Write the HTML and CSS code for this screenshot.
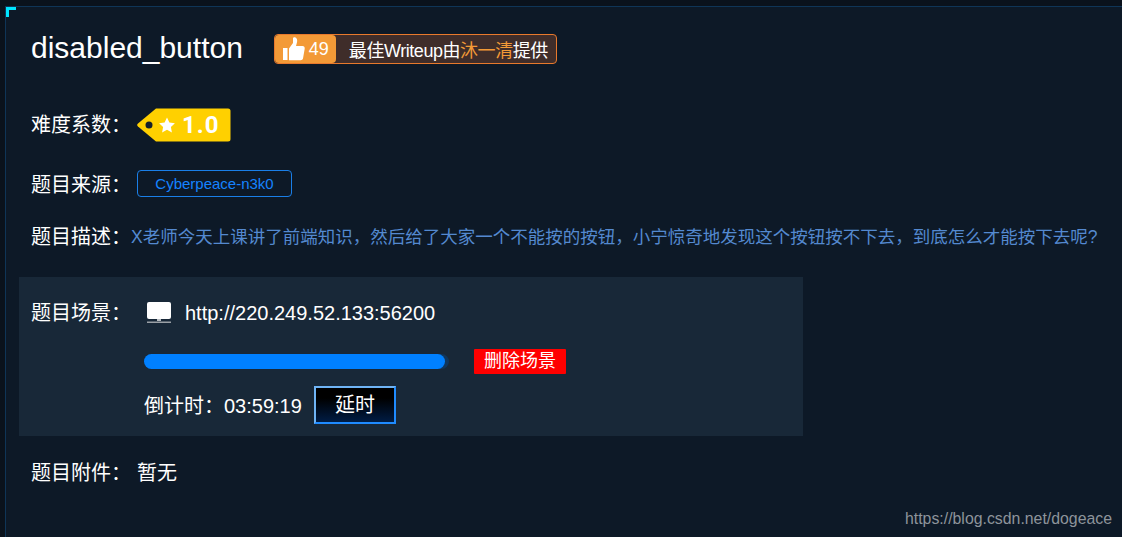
FILE: index.html
```html
<!DOCTYPE html>
<html lang="zh">
<head>
<meta charset="utf-8">
<title>disabled_button</title>
<link rel="stylesheet" href="styles.css">
</head>
<body>
<main class="panel">
  <span class="corner"></span>
  <header class="head">
    <h1 class="title">disabled_button</h1>
    <div class="wp">
      <span class="wp-like">
        <svg class="thumb" viewBox="0 0 22 24"><path d="M0 11h4.500v12H0zM6 11.500 10 6V1.500C10 .5 11 0 12 .2c2 .6 2.600 2.800 2 5L13 9h6.500c1.500 0 2.500 1.300 2.200 2.700L20 21.500c-.3 1-1.200 1.700-2.300 1.700H6z" fill="#fff"/></svg>
        <span class="wp-num">49</span>
      </span>
      <span class="wp-text">最佳Writeup由<span class="wp-name">沐一清</span>提供</span>
    </div>
  </header>

  <div class="row row-level">
    <span class="label">难度系数：</span>
    <svg class="tag" viewBox="0 0 94 34">
      <path d="M19 .5H91a2.500 2.500 0 0 1 2.500 2.500v28a2.500 2.500 0 0 1-2.500 2.500H19L1 18.500a2 2 0 0 1 0-3z" fill="#ffd000"/>
      <circle cx="12" cy="17" r="3.500" fill="#14202c"/>
      <path d="m30 9.500 2.400 5 5.500.7-4 3.800 1 5.400-4.900-2.600-4.900 2.600 1-5.400-4-3.800 5.500-.7z" fill="#fff"/>
      <text x="45" y="25" class="tag-text">1.0</text>
    </svg>
  </div>

  <div class="row row-source">
    <span class="label label-low">题目来源：</span>
    <span class="source">Cyberpeace-n3k0</span>
  </div>

  <div class="row row-desc">
    <span class="label label-low">题目描述：</span>
    <span class="desc">X老师今天上课讲了前端知识，然后给了大家一个不能按的按钮，小宁惊奇地发现这个按钮按不下去，到底怎么才能按下去呢?</span>
  </div>

  <section class="scene">
    <div class="scene-label label">题目场景：</div>
    <div class="scene-body">
      <div class="url-row">
        <svg class="monitor" viewBox="0 0 24 22"><rect x="0" y="0" width="24" height="17" rx="2" fill="#fff"/><rect x="10" y="17" width="4" height="2" fill="#b8bdc2"/><rect x="0" y="19.500" width="24" height="1.500" fill="#9aa0a6"/></svg>
        <span class="url">http://220.249.52.133:56200</span>
      </div>
      <div class="bar-row">
        <div class="track"><div class="fill"></div></div>
        <span class="del">删除场景</span>
      </div>
      <div class="count-row">
        <span class="count">倒计时：03:59:19</span>
        <span class="delay">延时</span>
      </div>
    </div>
  </section>

  <div class="row row-attach">
    <span class="label">题目附件：</span>
    <span class="none">暂无</span>
  </div>
</main>
<div class="mark">https://blog.csdn.net/dogeace</div>
</body>
</html>
```
FILE: styles.css
```css
* { box-sizing: border-box; }
html, body { margin: 0; height: 100%; }
body {
  background: #0a121c;
  overflow: hidden;
  padding: 6px 0 0 5px;
  color: #fff;
  font-family: "Liberation Sans", "Noto Sans CJK SC", sans-serif;
  font-size: 18px;
  position: relative;
}
.panel {
  position: relative;
  height: 531px;
  background: #0d1927;
  border: 1px solid #0f3557;
  border-right: 0;
  border-bottom: 0;
  padding: 0 0 0 13px;
}
.corner {
  position: absolute;
  left: 0;
  top: 0;
  width: 10px;
  height: 10px;
  border-left: 3px solid #00e5ff;
  border-top: 3px solid #00e5ff;
}
.head {
  display: flex;
  align-items: center;
  height: 30px;
  margin-top: 27px;
  padding-left: 12px;
}
.title {
  margin: -2px 0 0;
  font-size: 30px;
  font-weight: 400;
  line-height: 30px;
}
.wp {
  display: flex;
  align-items: center;
  width: 283px;
  height: 30px;
  margin-left: 31px;
  background: #3f2d2a;
  border: 1px solid #e8792c;
  border-radius: 4px;
}
.wp-like {
  display: flex;
  align-items: center;
  width: 61px;
  height: 28px;
  padding-left: 8px;
  background: #f39a37;
  border-radius: 4px;
}
.thumb { width: 22px; height: 24px; }
.wp-num { margin-left: 4px; font-size: 18px; }
.wp-text { margin-left: 13px; font-size: 18px; letter-spacing: -.45px; white-space: nowrap; }
.wp-name { color: #f39a37; }
.row { display: flex; align-items: center; padding-left: 12px; }
.label { width: 106px; flex: none; font-size: 20px; line-height: 24px; }
.label-low { padding-top: 4px; box-sizing: content-box; }
.row-level { height: 34px; margin-top: 44px; }
.tag { width: 94px; height: 34px; }
.tag-text { font: 700 24px Roboto, sans-serif; fill: #fff; letter-spacing: 1px; }
.row-source { height: 26px; margin-top: 28px; }
.source {
  width: 155px;
  height: 27px;
  border: 1px solid #1a7fe8;
  border-radius: 4px;
  color: #1583ff;
  font-size: 15px;
  line-height: 25px;
  text-align: center;
}
.row-desc { height: 26px; margin-top: 26px; }
.label + .desc { margin-left: -6px; }
.desc { color: #5489d0; font-size: 17.500px; white-space: nowrap; }
.scene {
  display: flex;
  width: 784px;
  height: 159px;
  margin-top: 29px;
  background: #182838;
  padding: 24px 0 0 12px;
}
.scene-label { width: 113px; }
.scene-body { display: flex; flex-direction: column; }
.url-row { display: flex; align-items: center; height: 24px; padding-left: 3px; }
.monitor { width: 24px; height: 22px; }
.url { margin-left: 14px; font-size: 20px; }
.bar-row { display: flex; align-items: center; height: 25px; margin-top: 24px; }
.track { width: 305px; height: 15px; background: #10365c; border-radius: 8px; }
.fill { width: 301px; height: 15px; background: #0080ff; border-radius: 8px; }
.del {
  width: 92px;
  height: 25px;
  margin-left: 25px;
  background: #ff0000;
  border-radius: 1px;
  line-height: 25px;
  text-align: center;
}
.count-row { display: flex; align-items: center; height: 38px; margin-top: 12px; }
.count { width: 170px; margin-top: -2px; font-size: 20px; white-space: nowrap; }
.delay {
  width: 82px;
  height: 38px;
  background: linear-gradient(#000 30%, #001c44);
  border: 2px solid;
  border-color: #6fb4f5 #1f8bff #1f8bff #6fb4f5;
  font-size: 20px;
  line-height: 34px;
  text-align: center;
}
.row-attach { height: 26px; margin-top: 24px; }
.label + .none { margin-top: -4px; margin-left: 0; font-size: 20px; }
.mark {
  position: absolute;
  right: 10px;
  top: 510px;
  color: #8d949b;
  font-size: 15.850px;
  line-height: 18px;
}
```
